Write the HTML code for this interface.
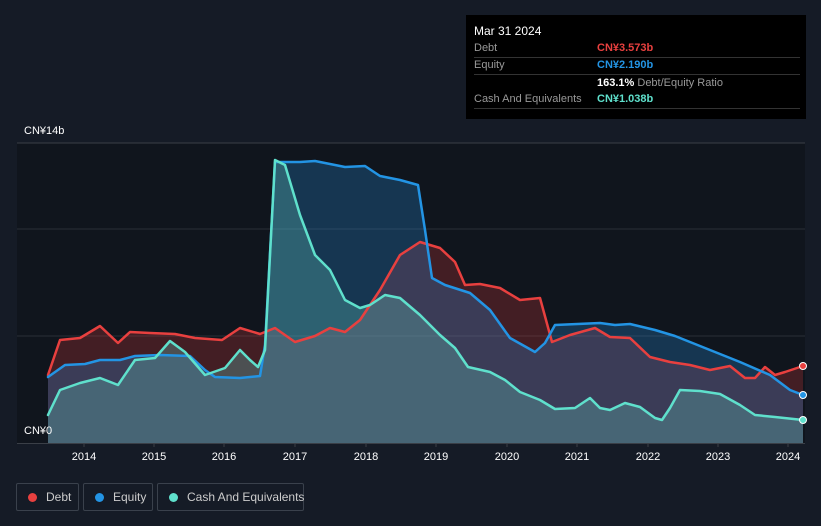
<!DOCTYPE html>
<html><head><meta charset="utf-8"><style>
body{margin:0;width:821px;height:526px;background:#151b26;font-family:"Liberation Sans",sans-serif;overflow:hidden;position:relative}
.tt{position:absolute;left:466px;top:15px;width:340px;height:104px;background:#000;color:#fff;font-size:11px}
.row{position:absolute;left:8px;width:326px;border-bottom:1px solid #333;height:17px}
.lab{position:absolute;left:0;color:#999}
.val{position:absolute;left:123px;font-weight:bold}
.leg{position:absolute;top:483px;height:26px;border:1px solid #3a414c;border-radius:2px;color:#ccc;font-size:12px;line-height:26px;white-space:nowrap;box-sizing:border-box;height:28px}
.dot{display:inline-block;width:9px;height:9px;border-radius:50%;margin:0 9px 0 11px;vertical-align:-1px}
.ax{position:absolute;color:#fff;font-size:11px}
</style></head><body>
<svg width="821" height="526" style="position:absolute;left:0;top:0">
<rect x="17" y="143" width="788" height="300" fill="#10151d"/>
<line x1="17" y1="143" x2="805" y2="143" stroke="#3a3f47"/>
<line x1="17" y1="229" x2="805" y2="229" stroke="#2a2f37"/>
<line x1="17" y1="336" x2="805" y2="336" stroke="#2a2f37"/>
<g stroke-linejoin="round" stroke-linecap="round">
<path d="M48,375 L60,340 80,338 100,326 118,343 130,332 150,333 175,334 195,338 222,340 240,328 260,334 275,328 295,342 315,336 330,328 345,332 360,320 380,290 400,255 420,242 440,248 455,262 465,285 480,284 500,288 520,300 540,298 552,342 570,335 595,328 610,337 630,338 650,357 670,362 690,365 710,370 730,366 745,378 755,378 765,367 775,375 785,372 803,366 L803,443 48,443Z" fill="rgba(220,60,60,0.25)"/>
<path d="M48,377 L65,365 85,364 100,360 120,360 135,356 160,355 190,356 205,370 215,377 240,378 260,376 265,345 275,162 300,162 315,161 345,167 365,166 380,176 400,180 418,185 425,230 432,278 445,285 470,293 490,310 510,338 535,352 545,343 555,325 600,323 615,325 630,324 655,330 675,336 690,342 710,350 740,362 770,375 790,390 803,395 L803,443 48,443Z" fill="rgba(40,140,220,0.28)"/>
<path d="M48,415 L60,390 80,383 100,378 118,385 135,360 155,358 170,341 185,352 205,375 225,368 240,350 250,360 258,367 265,350 275,160 285,165 300,215 315,255 330,270 345,300 360,308 370,305 385,295 400,298 420,315 440,335 455,348 468,367 490,372 505,380 520,392 540,400 555,409 575,408 590,398 600,408 610,410 625,403 640,407 655,418 662,420 670,408 680,390 700,391 720,394 740,405 755,415 775,417 803,420 L803,443 48,443Z" fill="rgba(100,200,190,0.3)"/>
<path d="M48,375 L60,340 80,338 100,326 118,343 130,332 150,333 175,334 195,338 222,340 240,328 260,334 275,328 295,342 315,336 330,328 345,332 360,320 380,290 400,255 420,242 440,248 455,262 465,285 480,284 500,288 520,300 540,298 552,342 570,335 595,328 610,337 630,338 650,357 670,362 690,365 710,370 730,366 745,378 755,378 765,367 775,375 785,372 803,366" fill="none" stroke="#e8403f" stroke-width="2.5"/>
<path d="M48,377 L65,365 85,364 100,360 120,360 135,356 160,355 190,356 205,370 215,377 240,378 260,376 265,345 275,162 300,162 315,161 345,167 365,166 380,176 400,180 418,185 425,230 432,278 445,285 470,293 490,310 510,338 535,352 545,343 555,325 600,323 615,325 630,324 655,330 675,336 690,342 710,350 740,362 770,375 790,390 803,395" fill="none" stroke="#2394e4" stroke-width="2.5"/>
<path d="M48,415 L60,390 80,383 100,378 118,385 135,360 155,358 170,341 185,352 205,375 225,368 240,350 250,360 258,367 265,350 275,160 285,165 300,215 315,255 330,270 345,300 360,308 370,305 385,295 400,298 420,315 440,335 455,348 468,367 490,372 505,380 520,392 540,400 555,409 575,408 590,398 600,408 610,410 625,403 640,407 655,418 662,420 670,408 680,390 700,391 720,394 740,405 755,415 775,417 803,420" fill="none" stroke="#5fe0cc" stroke-width="2.5"/>
</g>
<circle cx="803" cy="366" r="3.5" fill="#e8403f" stroke="#fff" stroke-width="1"/>
<circle cx="803" cy="395" r="3.5" fill="#2394e4" stroke="#fff" stroke-width="1"/>
<circle cx="803" cy="420" r="3.5" fill="#5fe0cc" stroke="#fff" stroke-width="1"/>
<line x1="17" y1="443.5" x2="805" y2="443.5" stroke="#3a3f47"/>
<g stroke="#3a3f47"><line x1="84" y1="443" x2="84" y2="447"/><line x1="154" y1="443" x2="154" y2="447"/><line x1="224" y1="443" x2="224" y2="447"/><line x1="295" y1="443" x2="295" y2="447"/><line x1="366" y1="443" x2="366" y2="447"/><line x1="436" y1="443" x2="436" y2="447"/><line x1="507" y1="443" x2="507" y2="447"/><line x1="577" y1="443" x2="577" y2="447"/><line x1="648" y1="443" x2="648" y2="447"/><line x1="718" y1="443" x2="718" y2="447"/><line x1="788" y1="443" x2="788" y2="447"/></g>
<g fill="#fff" font-size="11" font-family="Liberation Sans" text-anchor="middle">
<text x="84" y="460">2014</text><text x="154" y="460">2015</text><text x="224" y="460">2016</text><text x="295" y="460">2017</text><text x="366" y="460">2018</text><text x="436" y="460">2019</text><text x="507" y="460">2020</text><text x="577" y="460">2021</text><text x="648" y="460">2022</text><text x="718" y="460">2023</text><text x="788" y="460">2024</text>
</g>
</svg>
<div class="ax" style="left:24px;top:125px">CN¥14b</div>
<div class="ax" style="left:24px;top:425px">CN¥0</div>
<div class="tt">
<div style="position:absolute;left:8px;top:9px;font-size:12px">Mar 31 2024</div>
<div class="row" style="top:25px"><span class="lab" style="top:2px">Debt</span><span class="val" style="top:2px;color:#e8403f">CN¥3.573b</span></div>
<div class="row" style="top:42px"><span class="lab" style="top:2px">Equity</span><span class="val" style="top:2px;color:#2394e4">CN¥2.190b</span></div>
<div style="position:absolute;left:131px;top:62px"><b>163.1%</b> <span style="color:#999">Debt/Equity Ratio</span></div>
<div class="row" style="top:76px"><span class="lab" style="top:2px">Cash And Equivalents</span><span class="val" style="top:2px;color:#5fe0cc">CN¥1.038b</span></div>
</div>
<div class="leg" style="left:16px;width:63px"><span class="dot" style="background:#e8403f"></span>Debt</div>
<div class="leg" style="left:83px;width:70px"><span class="dot" style="background:#2394e4"></span>Equity</div>
<div class="leg" style="left:157px;width:147px"><span class="dot" style="background:#5fe0cc"></span>Cash And Equivalents</div>
</body></html>
